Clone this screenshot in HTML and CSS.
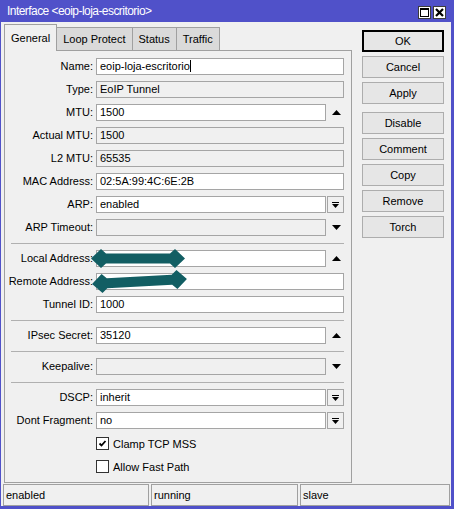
FILE: index.html
```html
<!DOCTYPE html>
<html>
<head>
<meta charset="utf-8">
<link rel="stylesheet" href="styles.css">
</head>
<body>
<div class="window">
  <div class="titlebar">
    <span class="title">Interface &lt;eoip-loja-escritorio&gt;</span>
    <div class="tbtns">
      <span class="tbtn"><svg width="11" height="11" viewBox="0 0 11 11"><rect x="1.5" y="1.5" width="8" height="8" fill="none" stroke="#000"/><rect x="1" y="1" width="9" height="2" fill="#000"/></svg></span>
      <span class="tbtn"><svg width="11" height="11" viewBox="0 0 11 11"><path d="M2 2 L9 9 M9 2 L2 9" stroke="#000" stroke-width="2.2" fill="none"/></svg></span>
    </div>
  </div>
  <div class="main">
    <div class="left">
      <div class="tabs">
        <div class="tab active">General</div>
        <div class="tab">Loop Protect</div>
        <div class="tab">Status</div>
        <div class="tab">Traffic</div>
        <div class="tabfill"></div>
      </div>
      <div class="panel">
        <div class="form">
          <div class="lbl">Name:</div>
          <div class="field"><div class="box edit">eoip-loja-escritorio<span class="caret"></span></div></div>

          <div class="lbl">Type:</div>
          <div class="field"><div class="box ro">EoIP Tunnel</div></div>

          <div class="lbl">MTU:</div>
          <div class="field"><div class="box edit">1500</div><div class="arrow"><svg width="9" height="5" viewBox="0 0 9 5"><polygon points="4.5,0 9,5 0,5" fill="#000"/></svg></div></div>

          <div class="lbl">Actual MTU:</div>
          <div class="field"><div class="box ro">1500</div></div>

          <div class="lbl">L2 MTU:</div>
          <div class="field"><div class="box ro">65535</div></div>

          <div class="lbl">MAC Address:</div>
          <div class="field"><div class="box edit">02:5A:99:4C:6E:2B</div></div>

          <div class="lbl">ARP:</div>
          <div class="field"><div class="box edit">enabled</div><div class="dd"><svg width="7" height="6" viewBox="0 0 7 6"><rect x="0" y="0" width="7" height="1" fill="#000"/><polygon points="0,2 7,2 3.5,6" fill="#000"/></svg></div></div>

          <div class="lbl">ARP Timeout:</div>
          <div class="field"><div class="box ro"></div><div class="arrow"><svg width="9" height="5" viewBox="0 0 9 5"><polygon points="0,0 9,0 4.5,5" fill="#000"/></svg></div></div>

          <div class="sep"></div>

          <div class="lbl">Local Address:</div>
          <div class="field"><div class="box edit"></div><div class="arrow"><svg width="9" height="5" viewBox="0 0 9 5"><polygon points="4.5,0 9,5 0,5" fill="#000"/></svg></div></div>

          <div class="lbl">Remote Address:</div>
          <div class="field"><div class="box edit"></div></div>

          <div class="lbl">Tunnel ID:</div>
          <div class="field"><div class="box edit">1000</div></div>

          <div class="sep"></div>

          <div class="lbl">IPsec Secret:</div>
          <div class="field"><div class="box edit">35120</div><div class="arrow"><svg width="9" height="5" viewBox="0 0 9 5"><polygon points="4.5,0 9,5 0,5" fill="#000"/></svg></div></div>

          <div class="sep"></div>

          <div class="lbl">Keepalive:</div>
          <div class="field"><div class="box ro"></div><div class="arrow"><svg width="9" height="5" viewBox="0 0 9 5"><polygon points="0,0 9,0 4.5,5" fill="#000"/></svg></div></div>

          <div class="sep"></div>

          <div class="lbl">DSCP:</div>
          <div class="field"><div class="box edit">inherit</div><div class="dd"><svg width="7" height="6" viewBox="0 0 7 6"><rect x="0" y="0" width="7" height="1" fill="#000"/><polygon points="0,2 7,2 3.5,6" fill="#000"/></svg></div></div>

          <div class="lbl">Dont Fragment:</div>
          <div class="field"><div class="box edit">no</div><div class="dd"><svg width="7" height="6" viewBox="0 0 7 6"><rect x="0" y="0" width="7" height="1" fill="#000"/><polygon points="0,2 7,2 3.5,6" fill="#000"/></svg></div></div>

          <div class="lbl"></div>
          <div class="check"><span class="cb"><svg width="11" height="11" viewBox="0 0 11 11"><polyline points="2.5,5.5 4.5,7.5 8.5,3" fill="none" stroke="#000" stroke-width="1.8"/></svg></span>Clamp TCP MSS</div>

          <div class="lbl"></div>
          <div class="check"><span class="cb"></span>Allow Fast Path</div>
        </div>
        <svg class="redact r1" width="94" height="19" viewBox="0 0 94 19"><polygon points="0,9.5 10,0 15,4.5 79,4.5 84,0 94,9.5 84,19 79,14.5 15,14.5 10,19" fill="#125e63"/></svg>
        <svg class="redact r2" width="95" height="19" viewBox="0 0 95 19"><polygon points="0,9.5 10,0 15,4.5 80,4.5 85,0 95,9.5 85,19 80,14.5 15,14.5 10,19" fill="#125e63"/></svg>
      </div>
    </div>
    <div class="buttons">
      <div class="btn default">OK</div>
      <div class="btn">Cancel</div>
      <div class="btn">Apply</div>
      <div class="btn spaced">Disable</div>
      <div class="btn">Comment</div>
      <div class="btn">Copy</div>
      <div class="btn">Remove</div>
      <div class="btn">Torch</div>
    </div>
  </div>
  <div class="status">
    <div class="cell c1">enabled</div>
    <div class="cell c2">running</div>
    <div class="cell c3">slave</div>
  </div>
</div>
</body>
</html>
```

FILE: styles.css
```css
html, body {
  margin: 0;
  padding: 0;
}
body {
  font-family: "Liberation Sans", Arial, sans-serif;
  font-size: 11px;
  color: #000;
  background: #f0f0f0;
}
.window {
  width: 454px;
  height: 509px;
  box-sizing: border-box;
  border-style: solid;
  border-color: #5051c9;
  border-width: 0 3px 3px 1px;
  background: #f0f0f0;
  display: flex;
  flex-direction: column;
}
.titlebar {
  height: 22px;
  flex: none;
  background: #5051c9;
  color: #fff;
  display: flex;
  align-items: center;
  padding: 0 5px 0 6px;
}
.title {
  font-size: 12px;
  letter-spacing: -0.55px;
  white-space: nowrap;
}
.tbtns {
  margin-left: auto;
  display: flex;
  gap: 2px;
  margin-top: 3px;
}
.tbtn {
  width: 13px;
  height: 13px;
  box-sizing: border-box;
  border: 1px solid #3c3c3c;
  background: #fff;
  display: flex;
  align-items: center;
  justify-content: center;
}
.tbtn svg {
  display: block;
}
.main {
  height: 461px;
  flex: none;
  display: flex;
  padding-left: 3px;
}
.left {
  width: 348px;
  display: flex;
  flex-direction: column;
}
.tabs {
  height: 29px;
  flex: none;
  display: flex;
  align-items: flex-end;
}
.tab {
  box-sizing: border-box;
  height: 24px;
  padding: 0 6px;
  display: flex;
  align-items: center;
  justify-content: center;
  background: #dadada;
  border: 1px solid #a0a0a0;
  border-left: none;
  white-space: nowrap;
}
.tab.active {
  height: 27px;
  background: #f0f0f0;
  border-left: 1px solid #a0a0a0;
  border-bottom: none;
  padding-bottom: 1px;
}
.tabfill {
  flex: 1;
  height: 1px;
  background: #a0a0a0;
}
.panel {
  position: relative;
  flex: 1;
  box-sizing: border-box;
  border: 1px solid #a0a0a0;
  border-top: none;
  padding: 7px 6px 7px 0;
}
.form {
  display: grid;
  grid-template-columns: 88px 248px;
  column-gap: 3px;
  row-gap: 6px;
}
.lbl {
  height: 17px;
  line-height: 17px;
  text-align: right;
  white-space: nowrap;
}
.field {
  height: 17px;
  display: flex;
  align-items: center;
}
.box {
  flex: 1;
  height: 17px;
  box-sizing: border-box;
  border: 1px solid #a5a5a5;
  padding: 0 3px;
  line-height: 15px;
  white-space: nowrap;
  overflow: hidden;
}
.box.edit {
  background: #fff;
}
.box.ro {
  background: #f0f0f0;
}
.caret {
  display: inline-block;
  width: 1px;
  height: 12px;
  background: #000;
  vertical-align: -2px;
}
.arrow {
  width: 18px;
  height: 17px;
  display: flex;
  align-items: center;
  justify-content: center;
  padding-left: 2px;
  box-sizing: border-box;
}
.arrow svg, .dd svg, .cb svg {
  display: block;
}
.dd {
  width: 17px;
  height: 17px;
  margin-left: 1px;
  box-sizing: border-box;
  border: 1px solid #a5a5a5;
  background: #f0f0f0;
  display: flex;
  align-items: center;
  justify-content: center;
}
.sep {
  grid-column: 1 / -1;
  height: 1px;
  margin: 1px 0 0 6px;
  background: #b0b0b0;
}
.check {
  height: 17px;
  display: flex;
  align-items: center;
  gap: 4px;
  white-space: nowrap;
}
.cb {
  width: 13px;
  height: 13px;
  box-sizing: border-box;
  border: 1px solid #333;
  background: #fff;
  display: flex;
  align-items: center;
  justify-content: center;
}
.redact {
  position: absolute;
  display: block;
}
.r1 {
  left: 86px;
  top: 198px;
}
.r2 {
  left: 87px;
  top: 221px;
  transform: rotate(-3deg);
}
.buttons {
  width: 82px;
  margin: 8px 0 0 10px;
  display: flex;
  flex-direction: column;
  gap: 4px;
}
.btn {
  height: 22px;
  box-sizing: border-box;
  border: 1px solid #adadad;
  background: #e6e6e6;
  display: flex;
  align-items: center;
  justify-content: center;
}
.btn.default {
  border-color: #000;
  box-shadow: inset 0 0 0 1px #000;
}
.btn.spaced {
  margin-top: 4px;
}
.status {
  height: 22px;
  flex: none;
  margin-top: 1px;
  display: flex;
  gap: 2px;
  padding: 0 1px 0 2px;
}
.cell {
  box-sizing: border-box;
  height: 22px;
  border: 1px solid #a0a0a0;
  padding-left: 2px;
  line-height: 20px;
  white-space: nowrap;
}
.c1 { width: 146px; }
.c2 { width: 147px; }
.c3 { flex: 1; }
```
